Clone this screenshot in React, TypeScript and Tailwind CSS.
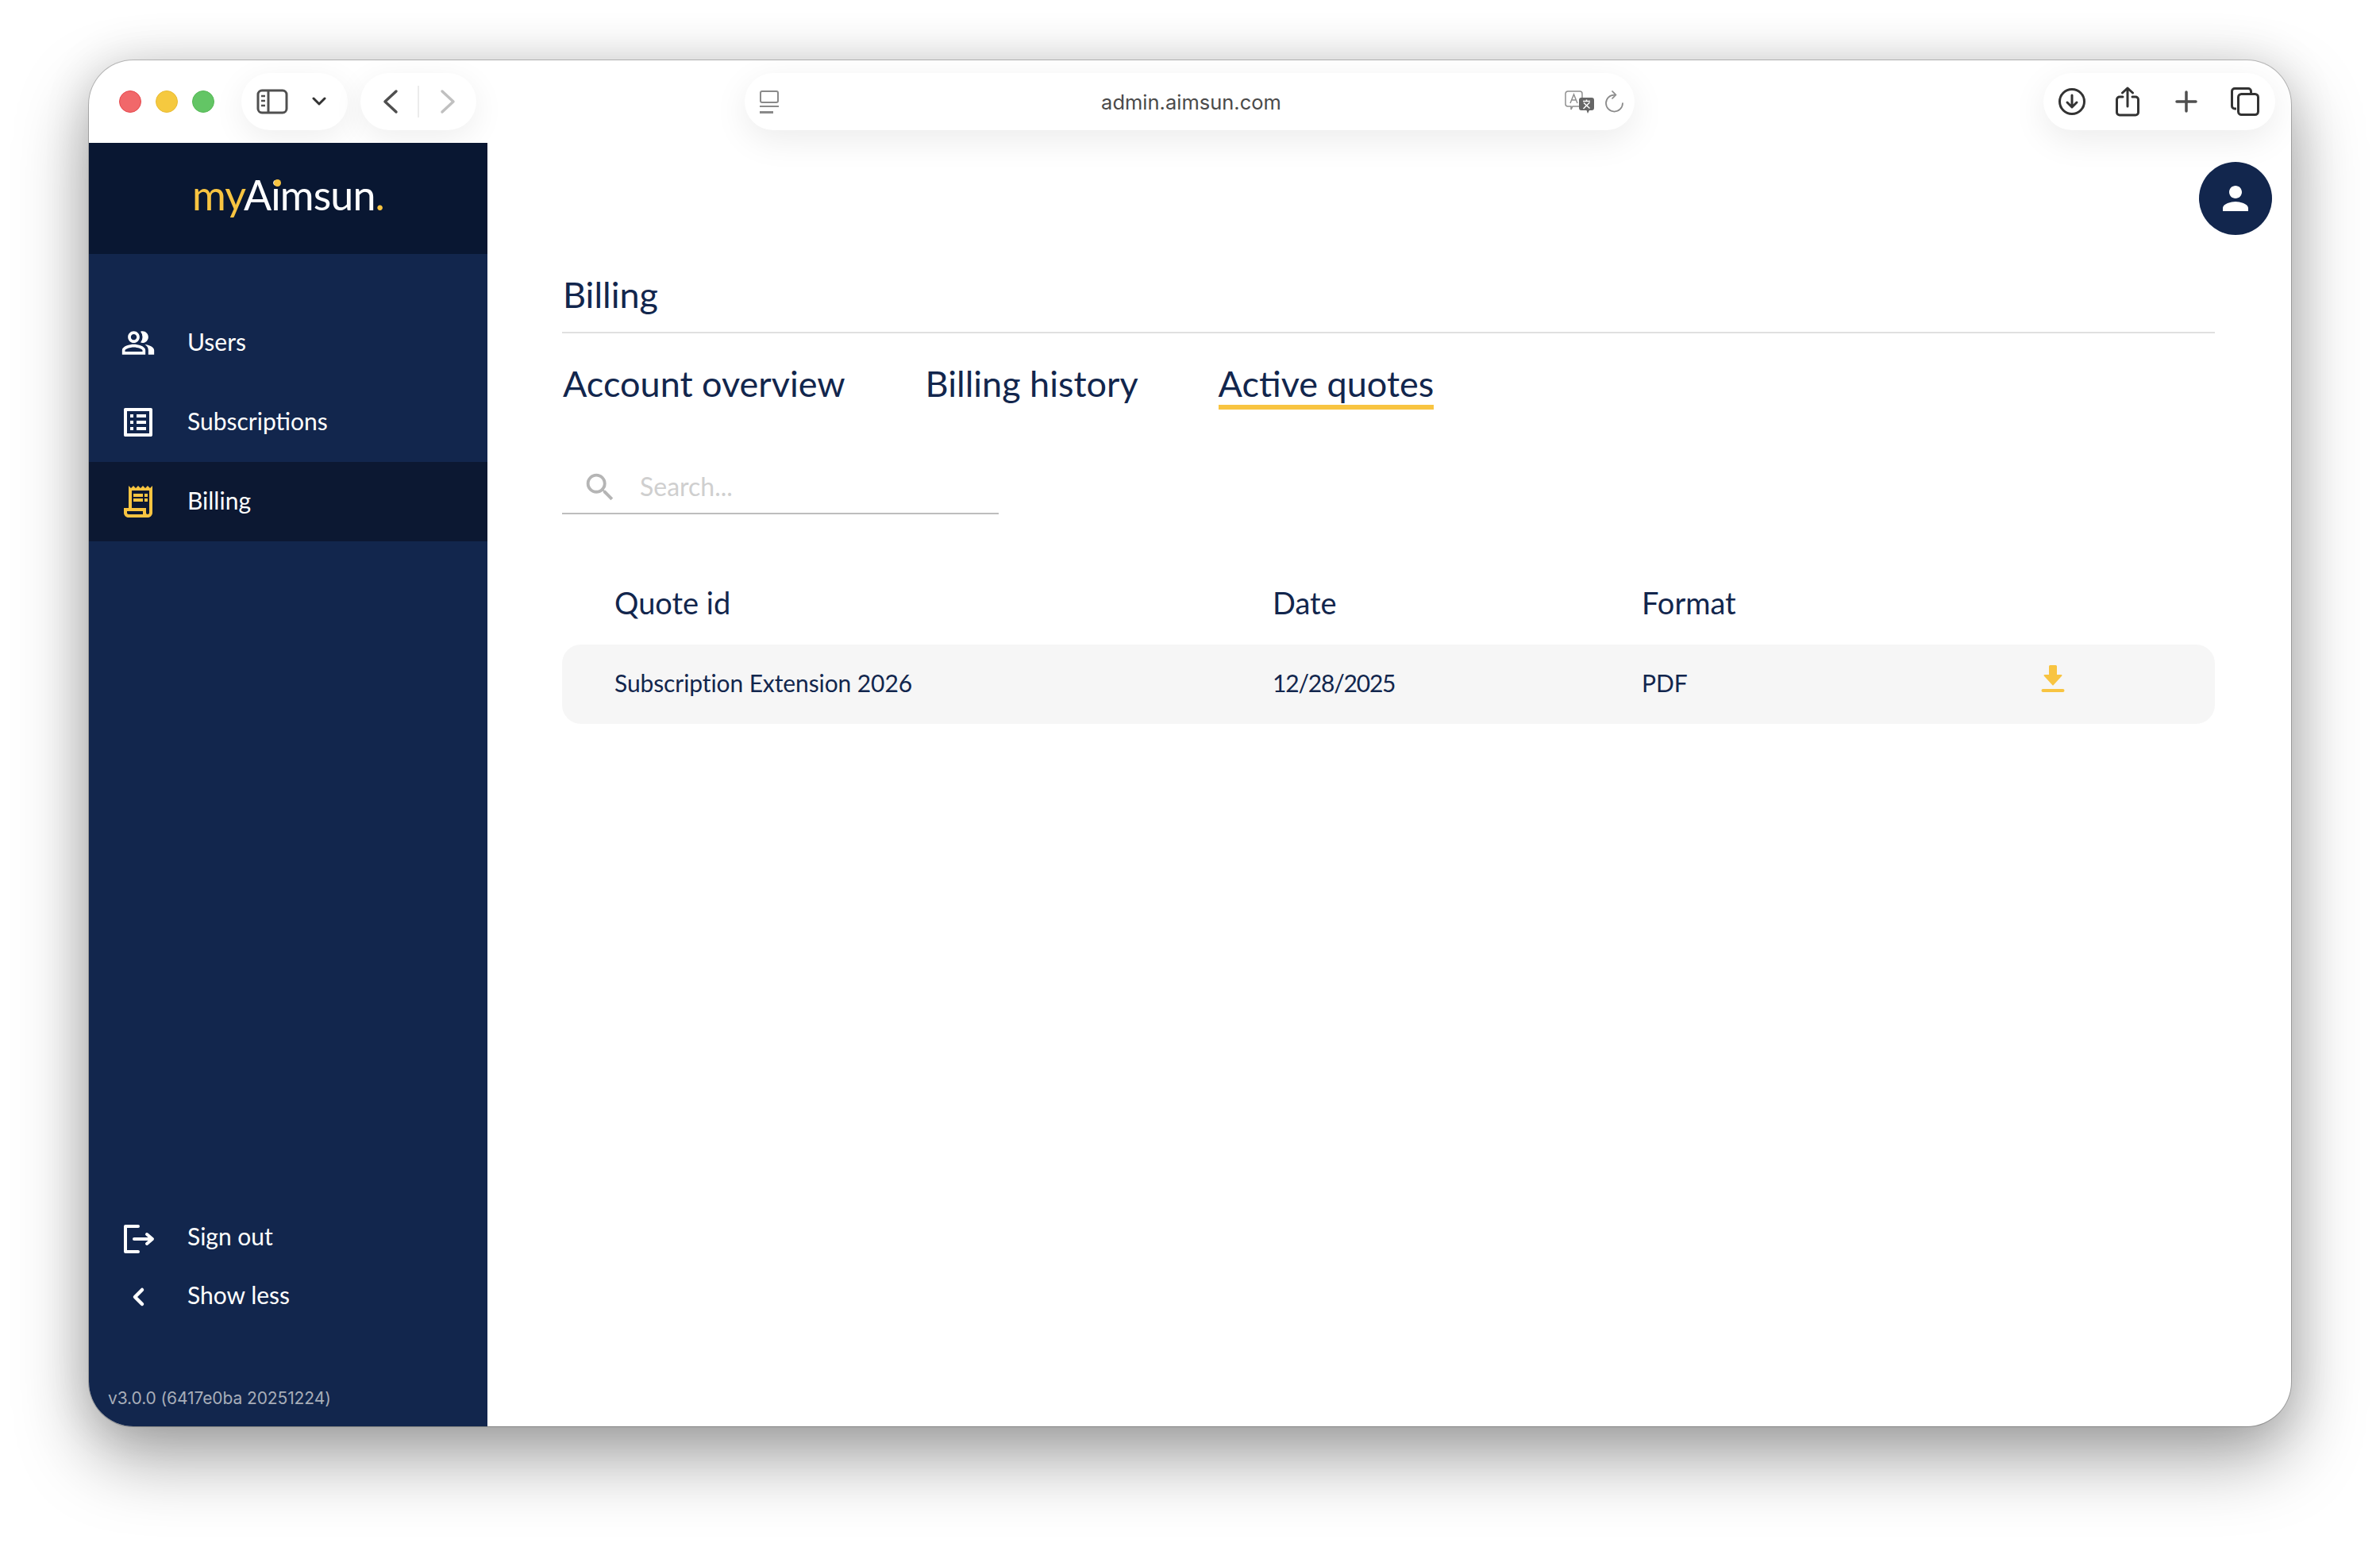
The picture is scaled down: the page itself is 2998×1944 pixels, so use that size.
import { MdOutlineListAlt, MdOutlinePeopleAlt, MdOutlineReceiptLong, MdPerson, MdSearch } from "react-icons/md"

const font = "font-['Lato','Liberation_Sans',sans-serif]"

function SignOutIcon() {
  return (
    <svg width="48" height="48" viewBox="0 0 48 48" fill="none" stroke="currentColor" strokeWidth="4" strokeLinecap="round" strokeLinejoin="round">
      <path d="M24 8H8v32h16" />
      <path d="M19 24h20" />
      <path d="M35 18l7 6-7 6" />
    </svg>
  )
}

function ChevronIcon() {
  return (
    <svg width="48" height="48" viewBox="0 0 48 48" fill="none" stroke="currentColor" strokeWidth="4.5" strokeLinecap="round" strokeLinejoin="round">
      <path d="M29 15l-9 9 9 9" />
    </svg>
  )
}

function SidebarToggle() {
  return (
    <svg width="40" height="32" viewBox="0 0 40 32" fill="none" stroke="#505050" strokeWidth="3">
      <rect x="2" y="2" width="36" height="28" rx="5" />
      <path d="M15 2v28" />
      <path d="M6 9h5M6 15h5M6 21h5" strokeWidth="2.5" />
    </svg>
  )
}

function TranslateIcon() {
  return (
    <svg width="38" height="29" viewBox="0 0 38 29" fill="none">
      <path d="M4 1h15a3 3 0 0 1 3 3v13a3 3 0 0 1-3 3h-9l-2 4v-4H4a3 3 0 0 1-3-3V4a3 3 0 0 1 3-3z" stroke="#8f8f8f" strokeWidth="1.5" />
      <path d="M7 16l4.5-11L16 16M8.5 12h6" stroke="#8f8f8f" strokeWidth="1.5" />
      <path d="M21 9h13a3 3 0 0 1 3 3v10a3 3 0 0 1-3 3h-3l-2 4-1.5-4H21a3 3 0 0 1-3-3V12a3 3 0 0 1 3-3z" fill="#666" />
      <path d="M23 13.5h9M27.5 11.5v2M23.5 23l8-8M24 15.5l7.5 7" stroke="#fff" strokeWidth="1.5" />
    </svg>
  )
}

function RefreshIcon() {
  return (
    <svg width="24" height="28" viewBox="0 0 24 28" fill="none" stroke="#8a8a8a" strokeWidth="1.75" strokeLinecap="round" strokeLinejoin="round">
      <path d="M22 16A10.5 10.5 0 1 1 11.5 5.5" />
      <path d="M9 1l4.5 4.5L9 10" />
    </svg>
  )
}

function BrowserDownload() {
  return (
    <svg width="36" height="36" viewBox="0 0 36 36" fill="none" stroke="#333" strokeWidth="3" strokeLinecap="round" strokeLinejoin="round">
      <circle cx="18" cy="18" r="15.5" />
      <path d="M18 10v15M12 19l6 6 6-6" />
    </svg>
  )
}

function ShareIcon() {
  return (
    <svg width="30" height="38" viewBox="0 0 30 38" fill="none" stroke="#333" strokeWidth="3" strokeLinecap="round" strokeLinejoin="round">
      <path d="M9 13H5a3.5 3.5 0 0 0-3.5 3.5v16A3.5 3.5 0 0 0 5 36h20a3.5 3.5 0 0 0 3.5-3.5v-16A3.5 3.5 0 0 0 25 13h-4" />
      <path d="M15 25V2M8.5 8L15 2l6.5 6" />
    </svg>
  )
}

function TabsIcon() {
  return (
    <svg width="36" height="36" viewBox="0 0 36 36" fill="none" stroke="#333" strokeWidth="3" strokeLinejoin="round">
      <path d="M7 27H5a3.5 3.5 0 0 1-3.5-3.5V5A3.5 3.5 0 0 1 5 1.5h17A3.5 3.5 0 0 1 25.5 5v3" />
      <rect x="9.5" y="8.5" width="25" height="26" rx="4" />
    </svg>
  )
}

function QuoteDownload() {
  return (
    <svg width="30" height="34" viewBox="0 0 30 34" fill="#f8c441">
      <path d="M10 1.5a1.5 1.5 0 0 1 1.5-1.5h7A1.5 1.5 0 0 1 20 1.5V12h5.5a1 1 0 0 1 .8 1.6L15.8 25a1 1 0 0 1-1.6 0L3.7 13.6a1 1 0 0 1 .8-1.6H10z" />
      <rect x="0.5" y="30" width="29" height="4" rx="2" />
    </svg>
  )
}

function NavRow({ icon, label, active }: { icon: React.ReactNode; label: string; active?: boolean }) {
  return (
    <div className={`flex h-[100px] items-center pl-[38px] text-[30px] text-white ${active ? "bg-[#0c1832]" : ""}`}>
      <div className={`flex w-[48px] justify-center ${active ? "text-[#f8c441]" : "text-white"}`}>{icon}</div>
      <span className="mb-[4px] ml-[38px]">{label}</span>
    </div>
  )
}

export default function App() {
  return (
    <div className={`h-[1944px] w-[2998px] overflow-hidden bg-white pl-[112px] pt-[76px] ${font}`}>
      <div className="relative flex h-[1721px] w-[2774px] flex-col overflow-hidden rounded-[56px] bg-white shadow-[0_0_0_1px_rgba(0,0,0,0.22),0_40px_90px_rgba(0,0,0,0.36),0_0_60px_rgba(0,0,0,0.12)]">
        {/* browser toolbar */}
        <div className="flex h-[104px] shrink-0 items-center pl-[38px]">
          <div className="flex gap-[18px]">
            <div className="h-[28px] w-[28px] rounded-full border border-[#e5484d] bg-[#f1686a]" />
            <div className="h-[28px] w-[28px] rounded-full border border-[#e8bb33] bg-[#f5c93f]" />
            <div className="h-[28px] w-[28px] rounded-full border border-[#55b855] bg-[#63c565]" />
          </div>
          <div className="ml-[34px] flex h-[72px] w-[134px] items-center rounded-full bg-white pl-[19px] shadow-[0_10px_40px_rgba(0,0,0,0.07)]">
            <SidebarToggle />
            <svg className="ml-[29px]" width="20" height="12" viewBox="0 0 20 12" fill="none" stroke="#333" strokeWidth="3" strokeLinecap="round" strokeLinejoin="round">
              <path d="M3 2l7 7 7-7" />
            </svg>
          </div>
          <div className="ml-[16px] flex h-[72px] w-[146px] items-center rounded-full bg-white pl-[28px] shadow-[0_10px_40px_rgba(0,0,0,0.07)]">
            <svg width="20" height="32" viewBox="0 0 20 32" fill="none" stroke="#4f4f4f" strokeWidth="3.5" strokeLinecap="round" strokeLinejoin="round">
              <path d="M17 3L3 16l14 13" />
            </svg>
            <div className="ml-[24px] h-[40px] w-[2px] bg-[#ececec]" />
            <svg className="ml-[26px]" width="20" height="32" viewBox="0 0 20 32" fill="none" stroke="#c0c0c0" strokeWidth="3.5" strokeLinecap="round" strokeLinejoin="round">
              <path d="M3 3l14 13L3 29" />
            </svg>
          </div>
          <div className="ml-[338px] flex h-[72px] w-[1121px] items-center rounded-full bg-white pl-[19px] pr-[13px] shadow-[0_12px_44px_rgba(0,0,0,0.08)]">
            <div className="flex w-[24px] flex-col gap-[3px]">
              <div className="h-[16px] rounded-[3px] border-2 border-[#8a8a8a]" />
              <div className="h-[2px] bg-[#8a8a8a]" />
              <div className="mt-[2px] h-[3px] w-[17px] bg-[#8a8a8a]" />
            </div>
            <div className="mt-[2px] flex-1 pl-[49px] text-center font-['Inter',sans-serif] text-[25.5px] text-[#4a4a4a]">admin.aimsun.com</div>
            <TranslateIcon />
            <div className="ml-[13px]">
              <RefreshIcon />
            </div>
          </div>
          <div className="ml-auto mr-[20px] flex h-[72px] w-[292px] items-center rounded-full bg-white pl-[18px] shadow-[0_12px_44px_rgba(0,0,0,0.08)]">
            <BrowserDownload />
            <div className="ml-[37px]">
              <ShareIcon />
            </div>
            <svg className="ml-[45px]" width="28" height="28" viewBox="0 0 28 28" fill="none" stroke="#4f4f4f" strokeWidth="3.5" strokeLinecap="round">
              <path d="M14 2v24M2 14h24" />
            </svg>
            <div className="ml-[42px]">
              <TabsIcon />
            </div>
          </div>
        </div>

        <div className="flex min-h-0 flex-1">
          {/* sidebar */}
          <aside className="flex w-[502px] shrink-0 flex-col bg-[#12264d]">
            <div className="flex h-[140px] shrink-0 items-center justify-center bg-[#091732]">
              <div className="relative mb-[11px] text-[52px] tracking-[-0.9px] text-white">
                <span className="text-[#f8c441]">my</span>Aimsun<span className="text-[#f8c441]">.</span>
                <div className="absolute left-[103px] top-[20px] h-[9px] w-[9px] rounded-full bg-[#f8c441]" />
              </div>
            </div>
            <nav className="mt-[62px]">
              <NavRow icon={<MdOutlinePeopleAlt size={44} />} label="Users" />
              <NavRow icon={<MdOutlineListAlt size={48} />} label="Subscriptions" />
              <NavRow icon={<MdOutlineReceiptLong size={48} />} label="Billing" active />
            </nav>
            <div className="mt-auto flex flex-col gap-[25px] pl-[38px] text-[30px] text-white">
              <div className="flex h-[48px] items-center">
                <SignOutIcon />
                <span className="mb-[6px] ml-[38px]">Sign out</span>
              </div>
              <div className="flex h-[48px] items-center">
                <ChevronIcon />
                <span className="mb-[4px] ml-[38px]">Show less</span>
              </div>
            </div>
            <div className="mb-[20px] mt-[88px] pl-[24px] font-['Inter',sans-serif] text-[21px] tracking-[-0.1px] text-[#a7adb8]">v3.0.0 (6417e0ba 20251224)</div>
          </aside>

          {/* page */}
          <main className="relative min-w-0 flex-1 pl-[94px] pr-[96px] text-[#12264d]">
            <div className="absolute right-[24px] top-[24px] flex h-[92px] w-[92px] items-center justify-center rounded-full bg-[#12264d] text-white">
              <MdPerson size={48} />
            </div>
            <div className="flex h-[240px] items-end border-b-2 border-[#e0e0e0] pb-[13px] pl-px text-[45px]">Billing</div>
            <div className="mt-[30px] flex gap-[101px] pl-px text-[45px]">
              <div className="h-[66px]">Account overview</div>
              <div className="h-[66px]">Billing history</div>
              <div className="h-[66px] border-b-[6px] border-[#f8c441]">Active quotes</div>
            </div>
            <div className="mt-[66px] flex h-[66px] w-[550px] items-center border-b-2 border-[#bdbdbd] pl-[25px]">
              <MdSearch size={46} className="text-[#b5b5b5]" />
              <span className="mb-[2px] ml-[27px] text-[32px] text-[#cfcfcf]">Search...</span>
            </div>
            <div className="mt-[83px] grid grid-cols-[829px_465px_503px_1fr] pl-[66px] text-[38px]">
              <div>Quote id</div>
              <div>Date</div>
              <div>Format</div>
            </div>
            <div className="mt-[24px] grid h-[100px] grid-cols-[829px_465px_503px_1fr] items-center rounded-[24px] bg-[#f6f6f6] pl-[66px] text-[30px]">
              <div className="mb-[3px] tracking-[-0.1px]">Subscription Extension 2026</div>
              <div className="mb-[3px] tracking-[-1.2px]">12/28/2025</div>
              <div className="mb-[3px]">PDF</div>
              <div className="mb-[14px] flex">
                <QuoteDownload />
              </div>
            </div>
          </main>
        </div>
      </div>
    </div>
  )
}
